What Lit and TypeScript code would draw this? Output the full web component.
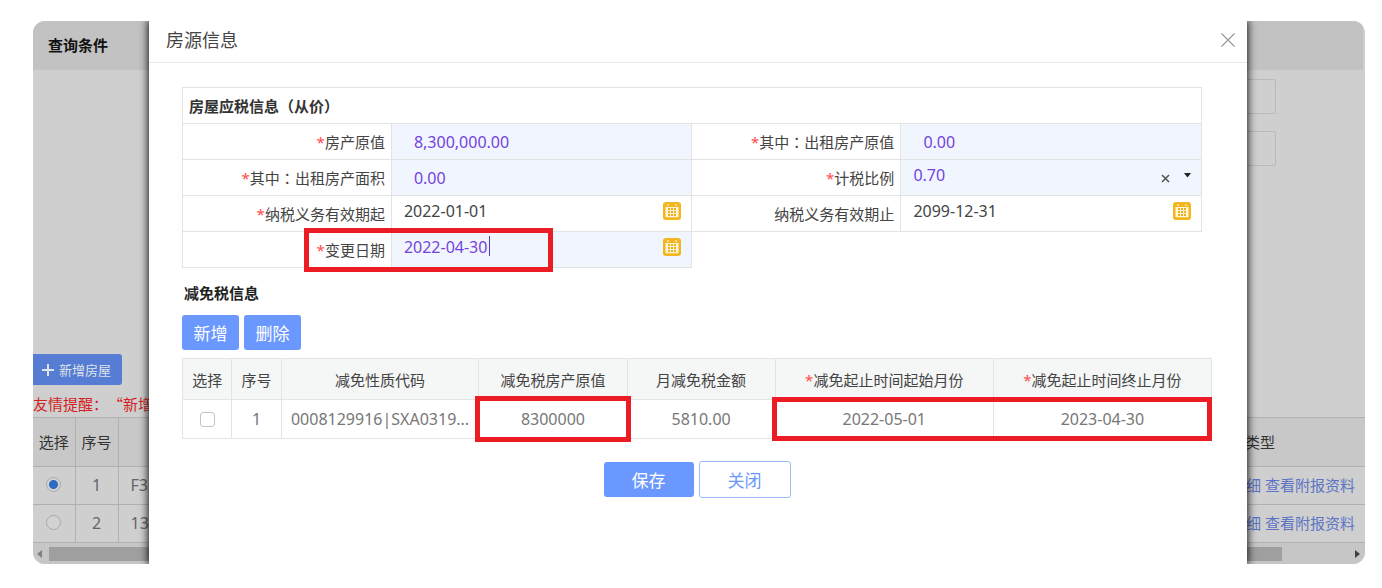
import { LitElement, html, css, svg } from "lit";
import { customElement, property } from "lit/decorators.js";

const colon = html`<span class="colon">：</span>`;
const star = html`<span class="star">*</span>`;

@customElement("calendar-button")
class CalendarButton extends LitElement {
  @property() label = "选择日期";

  static styles = css`
    :host { display: block; width: 18px; height: 18px; }
    button { display: block; width: 18px; height: 18px; padding: 0; border: 0; background: none; }
    svg { display: block; }
  `;

  render() {
    return html`<button type="button" aria-label=${this.label}>
      <svg width="18" height="18" viewBox="0 0 18 18">
        <rect width="18" height="18" rx="3" fill="#f3b61f" />
        <path d="M2.500 5h13v9.500a.8.8 0 0 1-.8.8H3.300a.8.8 0 0 1-.8-.8V5z" fill="#fff6d8" />
        <path d="M5 2v2M13 2v2" stroke="#fff3c4" stroke-width="1.200" />
        ${[5, 8, 11].map((x) =>
          [6, 9, 12].map((y) => svg`<rect x=${x} y=${y} width="2" height="2" fill="#edae1a" />`)
        )}
      </svg>
    </button>`;
  }
}

@customElement("query-page")
class QueryPage extends LitElement {
  static styles = css`
    * { box-sizing: border-box; }
    :host { display: flex; flex-direction: column; height: 100%; background: #cfcfcf; color: #333; }
    h2 { margin: 0 2px 0 0; padding-left: 15px; background: #c2c2c2; font-size: 15px; line-height: 49px; color: #111; }
    .filters { flex: 1; display: flex; flex-direction: column; align-items: flex-end; gap: 17px; padding: 9px 89px 0 0; }
    .filters input { width: 180px; height: 35px; border: 1px solid #bababa; border-radius: 2px; background: none; }
    .add {
      display: flex; align-items: center; align-self: flex-start; gap: 4px; height: 31px; width: 89px; padding: 0 0 0 8px;
      border: 0; border-radius: 0 3px 3px 0; background: #567dd3; color: #dfe3ea; font: inherit; font-size: 13px; white-space: nowrap;
    }
    .tip { margin: 0; font-family: "Noto Sans CJK SC", sans-serif; font-size: 15px; line-height: 32px; height: 32px; padding-top: 3px; color: #d21f24; white-space: nowrap; }
    table { width: 100%; border-collapse: collapse; table-layout: fixed; }
    th, td { height: 38px; padding: 0 0 2px; border: 1px solid #b0b0b0; font-weight: normal; text-align: center; white-space: nowrap; }
    th { height: 49px; background: #c8c8c8; font-size: 15px; }
    td { font-size: 16px; color: #666; }
    th:first-child, td:first-child { border-left: 0; }
    th:last-child, td:last-child { border-right: 0; text-align: right; }
    th:last-child { padding-right: 90px; }
    td:last-child { padding-right: 10px; font-size: 15px; }
    .pick { width: 42px; }
    .no { width: 43px; }
    .code { text-align: left; padding-left: 12px; }
    a { color: #5c74c4; text-decoration: none; }
    input[type="radio"] {
      appearance: none; display: block; width: 15px; height: 15px; margin: 0 auto; border: 1px solid #aaa; border-radius: 50%; background: #d2d2d2;
    }
    input[type="radio"]:checked { background: radial-gradient(circle, #2d6cc0 4px, #d2d2d2 5px); }
    .scroll { display: flex; align-items: center; justify-content: space-between; height: 21px; padding: 0 5px 0 4px; background: #c6c6c6; }
    .thumb { flex: 1; height: 14px; margin: 0 73px 0 7px; background: #9f9f9f; }
    svg { display: block; }
  `;

  render() {
    const rows = [
      { no: 1, code: "F3", on: true },
      { no: 2, code: "13", on: false },
    ];
    return html`
      <h2>查询条件</h2>
      <div class="filters">
        <input type="text" aria-label="查询条件一" />
        <input type="text" aria-label="查询条件二" />
      </div>
      <button class="add" type="button">
        <svg width="14" height="14" viewBox="0 0 14 14"><path d="M7 1v12M1 7h12" stroke="#dfe3ea" stroke-width="2" /></svg>
        新增房屋
      </button>
      <p class="tip">友情提醒：“新增</p>
      <table>
        <thead>
          <tr><th class="pick">选择</th><th class="no">序号</th><th></th><th>类型</th></tr>
        </thead>
        <tbody>
          ${rows.map(
            (r) => html`<tr>
              <td><input type="radio" name="house" aria-label="选择 ${r.no}" .checked=${r.on} /></td>
              <td>${r.no}</td>
              <td class="code">${r.code}</td>
              <td><a href="#">细</a> <a href="#">查看附报资料</a></td>
            </tr>`
          )}
        </tbody>
      </table>
      <div class="scroll">
        <svg width="5" height="8" viewBox="0 0 5 8"><path d="M5 0v8L0 4z" fill="#808080" /></svg>
        <div class="thumb"></div>
        <svg width="5" height="8" viewBox="0 0 5 8"><path d="M0 0v8l5-4z" fill="#404040" /></svg>
      </div>
    `;
  }
}

@customElement("house-dialog")
class HouseDialog extends LitElement {
  static styles = css`
    * { box-sizing: border-box; }
    :host { display: block; background: #fff; color: #444; font-size: 15px; }
    header { display: flex; align-items: center; justify-content: space-between; height: 42px; padding: 0 12px 3px 17px; border-bottom: 1px solid #e8e8e8; }
    h1 { margin: 0; font-size: 18px; font-weight: normal; line-height: 24px; }
    .close { width: 14px; height: 14px; padding: 0; border: 0; background: none; }
    svg { display: block; }
    .body { padding: 24px 35px 0 33px; }
    table { border-collapse: collapse; table-layout: fixed; }
    th, td { padding: 0; border: 1px solid #e2e4e4; font-weight: normal; white-space: nowrap; }
    .star { color: #ff4a4a; }
    .colon { font-family: "Noto Sans CJK TC", sans-serif; }

    .form { width: calc(100% - 10px); }
    .form th, .form td { height: 36px; }
    .form .caption { padding-left: 6px; text-align: left; font-weight: bold; color: #333; }
    .form .label { position: relative; width: 20.5%; padding-right: 6px; text-align: right; }
    .form .value { width: 29.5%; }
    .edit { background: #f1f6fe; color: #7443dc; }
    .field { position: relative; display: flex; align-items: center; height: 35px; padding: 0 10px 0 22px; }
    .field.top { padding: 0 10px 5px 12px; }
    .field input, .field select {
      appearance: none; flex: 1; min-width: 0; height: 24px; padding: 0; border: 0; outline: 0; background: none;
      color: inherit; font: inherit; font-size: 16px; line-height: 24px;
    }
    .clear { width: 9px; height: 9px; margin: 6px 14px 0 0; padding: 0; border: 0; background: none; }
    .caret { position: absolute; left: 97px; top: 4px; width: 1px; height: 20px; background: #5a36c8; }

    h3 { margin: 15px 0 12px; padding-left: 2px; font-size: 15px; line-height: 20px; color: #222; }
    .tools { display: flex; gap: 5px; margin-bottom: 8px; }
    .btn { height: 35px; padding: 0; border: 0; border-radius: 3px; background: #6b98fe; color: #fff; font: inherit; font-size: 17px; }
    .small { width: 57px; }
    .grid { width: 100%; }
    .grid th { height: 41px; background: #f5f6f6; }
    .grid td { height: 39px; position: relative; text-align: center; font-size: 16px; color: #777; }
    .c1 { width: 49px; }
    .c3 { width: 19.2%; }
    .c4 { width: 14.4%; }
    .c6 { width: 21.2%; }
    .grid input { appearance: none; display: block; width: 15px; height: 15px; margin: 0 auto; border: 1px solid #c4c4c4; border-radius: 3px; background: #fff; }
    .mark { position: absolute; z-index: 1; border: 5px solid #ec1c24; pointer-events: none; }
    .mark.date { left: 121px; top: -4px; bottom: -5px; width: 249px; }
    .mark.amount { inset: -4px; }
    .mark.period { inset: -3px calc(-100% - 2px) -3px -4px; }
    .actions { display: flex; align-items: center; justify-content: center; gap: 5px; padding-top: 22px; }
    .wide { width: 90px; }
    .ghost { width: 92px; height: 37px; border: 1px solid #9dbaf8; background: #fff; color: #6b98fe; }
  `;

  render() {
    return html`
      <header>
        <h1>房源信息</h1>
        <button class="close" type="button" aria-label="关闭窗口">
          <svg width="14" height="14" viewBox="0 0 14 14"><path d="M.5.5l13 13M13.500.5l-13 13" stroke="#999" stroke-width="1.200" /></svg>
        </button>
      </header>
      <div class="body">
        <table class="form">
          <colgroup><col class="label" /><col class="value" /><col class="label" /><col class="value" /></colgroup>
          <tr><th class="caption" colspan="4">房屋应税信息（从价）</th></tr>
          <tr>
            <td class="label"><label for="worth">${star}房产原值</label></td>
            <td class="value edit"><div class="field"><input id="worth" .value=${"8,300,000.00"} /></div></td>
            <td class="label"><label for="rentWorth">${star}其中${colon}出租房产原值</label></td>
            <td class="value edit"><div class="field"><input id="rentWorth" .value=${"0.00"} /></div></td>
          </tr>
          <tr>
            <td class="label"><label for="rentArea">${star}其中${colon}出租房产面积</label></td>
            <td class="value edit"><div class="field"><input id="rentArea" .value=${"0.00"} /></div></td>
            <td class="label"><label for="ratio">${star}计税比例</label></td>
            <td class="value edit">
              <div class="field top">
                <select id="ratio"><option>0.70</option></select>
                <button class="clear" type="button" aria-label="清除">
                  <svg width="9" height="9" viewBox="0 0 9 9"><path d="M1 1l7 7M8 1l-7 7" stroke="#555" stroke-width="1.600" /></svg>
                </button>
                <svg width="7" height="5" viewBox="0 0 7 5"><path d="M0 0h7L3.500 4.500z" fill="#222" /></svg>
              </div>
            </td>
          </tr>
          <tr>
            <td class="label"><label for="from">${star}纳税义务有效期起</label></td>
            <td class="value"><div class="field top"><input id="from" .value=${"2022-01-01"} /><calendar-button></calendar-button></div></td>
            <td class="label"><label for="to">纳税义务有效期止</label></td>
            <td class="value"><div class="field top"><input id="to" .value=${"2099-12-31"} /><calendar-button></calendar-button></div></td>
          </tr>
          <tr>
            <td class="label"><label for="changed">${star}变更日期</label><span class="mark date"></span></td>
            <td class="value edit">
              <div class="field top"><input id="changed" .value=${"2022-04-30"} /><span class="caret"></span><calendar-button></calendar-button></div>
            </td>
          </tr>
        </table>

        <h3>减免税信息</h3>
        <div class="tools">
          <button class="btn small" type="button">新增</button>
          <button class="btn small" type="button">删除</button>
        </div>
        <table class="grid">
          <thead>
            <tr>
              <th class="c1">选择</th>
              <th class="c1">序号</th>
              <th class="c3">减免性质代码</th>
              <th class="c4">减免税房产原值</th>
              <th class="c4">月减免税金额</th>
              <th class="c6">${star}减免起止时间起始月份</th>
              <th class="c6">${star}减免起止时间终止月份</th>
            </tr>
          </thead>
          <tbody>
            <tr>
              <td><input type="checkbox" aria-label="选择 1" /></td>
              <td>1</td>
              <td>0008129916|SXA0319...</td>
              <td>8300000<span class="mark amount"></span></td>
              <td>5810.00</td>
              <td>2022-05-01<span class="mark period"></span></td>
              <td>2023-04-30</td>
            </tr>
          </tbody>
        </table>
        <div class="actions">
          <button class="btn wide" type="button">保存</button>
          <button class="btn ghost" type="button">关闭</button>
        </div>
      </div>
    `;
  }
}

@customElement("app-root")
class AppRoot extends LitElement {
  static styles = css`
    :host {
      display: block; box-sizing: border-box; height: 100vh; padding: 21px 17px 24px 33px; background: #fff;
      font-family: "Noto Sans", "Noto Sans CJK SC", sans-serif; text-spacing-trim: space-all;
    }
    .stage { position: relative; height: 100%; overflow: hidden; border-radius: 12px; }
    house-dialog { position: absolute; inset: 0 118px 0 116px; box-shadow: 0 0 8px 1px rgba(0, 0, 0, 0.9); }
  `;

  render() {
    return html`<div class="stage">
      <query-page></query-page>
      <house-dialog role="dialog" aria-label="房源信息"></house-dialog>
    </div>`;
  }
}
